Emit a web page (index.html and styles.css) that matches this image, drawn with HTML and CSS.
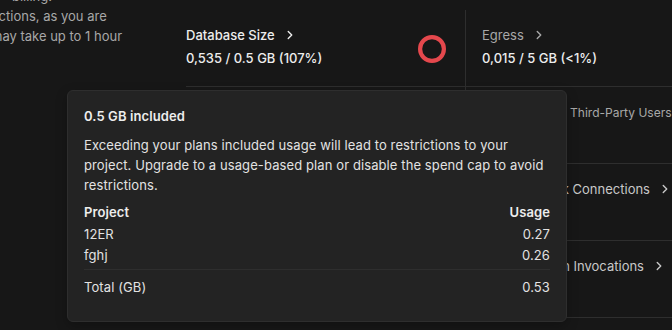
FILE: index.html
```html
<!DOCTYPE html>
<html lang="en">
<head>
<meta charset="utf-8">
<title>Usage</title>
<link rel="stylesheet" href="styles.css">
</head>
<body>
<div class="page">
  <aside class="intro">
    <div class="line l0">billing.</div>
    <div class="line l1">restrictions, as you are</div>
    <div class="line l2">may take up to 1 hour</div>
  </aside>
  <section class="metrics">
    <div class="cell mid">
      <div class="metric">
        <div class="title strong">Database Size <svg class="chev" viewBox="0 0 16 16"><path d="M6 4l4 4-4 4"/></svg></div>
        <div class="value">0,535 / 0.5 GB (107%)</div>
      </div>
      <svg class="ring" viewBox="0 0 28 28"><circle cx="14" cy="14" r="11.9"/></svg>
    </div>
    <div class="cell side">
      <div class="metric">
        <div class="title">Egress <svg class="chev" viewBox="0 0 16 16"><path d="M6 4l4 4-4 4"/></svg></div>
        <div class="value">0,015 / 5 GB (&lt;1%)</div>
      </div>
    </div>
    <div class="cell mid"></div>
    <div class="cell side">
      <div class="metric">
        <div class="title small">Monthly Active Third-Party Users <svg class="chev" viewBox="0 0 16 16"><path d="M6 4l4 4-4 4"/></svg></div>
      </div>
    </div>
    <div class="cell mid"></div>
    <div class="cell side">
      <div class="metric">
        <div class="title light">Realtime Peak Connections <svg class="chev" viewBox="0 0 16 16"><path d="M6 4l4 4-4 4"/></svg></div>
      </div>
    </div>
    <div class="cell mid"></div>
    <div class="cell side">
      <div class="metric">
        <div class="title light">Edge Function Invocations <svg class="chev" viewBox="0 0 16 16"><path d="M6 4l4 4-4 4"/></svg></div>
      </div>
    </div>
  </section>

  <div class="tooltip">
    <div class="tt-title">0.5 GB included</div>
    <p class="tt-body">Exceeding your plans included usage will lead to restrictions to your project. Upgrade to a usage-based plan or disable the spend cap to avoid restrictions.</p>
    <div class="tt-table">
      <div class="th">Project</div><div class="th num">Usage</div>
      <div class="td">12ER</div><div class="td num">0.27</div>
      <div class="td sep">fghj</div><div class="td num sep">0.26</div>
      <div class="tf">Total (GB)</div><div class="tf num">0.53</div>
    </div>
  </div>
</div>
</body>
</html>
```
FILE: styles.css
```css
* { box-sizing: border-box; }
html, body {
  margin: 0;
  padding: 0;
  background: #171717;
  width: 672px;
  height: 330px;
  overflow: hidden;
}
body {
  font-family: Inter, "Noto Sans", sans-serif;
  font-size: 13px;
  line-height: 20px;
  color: #ededed;
}
.page {
  position: relative;
  display: grid;
  grid-template-columns: 186px 1fr;
  height: 330px;
}
.intro {
  overflow: hidden;
  margin-top: -14px;
  color: #a8a8a8;
  white-space: nowrap;
}
.line { line-height: 20px; }
.l0 { text-indent: 12px; }
.l1 { text-indent: -33px; }
.l2 { text-indent: -9px; }

.metrics {
  display: grid;
  grid-template-columns: 279px 1fr;
  grid-auto-rows: 77px;
  margin-top: 10px;
  overflow: hidden;
}
.cell {
  border-bottom: 1px solid #2e2e2e;
  min-width: 0;
}
.mid {
  display: flex;
  align-items: center;
  justify-content: space-between;
  padding-right: 19px;
}
.side {
  border-left: 1px solid #2e2e2e;
  padding-left: 16px;
}
.metric {
  display: flex;
  flex-direction: column;
  gap: 3px;
  padding-top: 15px;
  align-self: flex-start;
}
.title {
  display: flex;
  align-items: center;
  gap: 8px;
  color: #a8a8a8;
  white-space: nowrap;
}
.title.strong { color: #ededed; font-weight: 500; }
.title.light { color: #c8c8c8; }
.title.small { font-size: 12px; padding-top: 1px; }
.value { color: #ededed; font-weight: 500; }
.chev {
  width: 14px;
  height: 14px;
  fill: none;
  stroke: currentColor;
  stroke-width: 1.6;
  stroke-linecap: round;
  stroke-linejoin: round;
  flex: none;
}
.ring {
  width: 28px;
  height: 28px;
  margin-top: 1px;
  fill: none;
  stroke: #e5484d;
  stroke-width: 4.2;
}

.tooltip {
  position: absolute;
  left: 67px;
  top: 90px;
  width: 500px;
  height: 232px;
  background: #232323;
  border: 1px solid #2e2e2e;
  border-radius: 6px;
  padding: 15px 16px;
  letter-spacing: 0.1px;
  box-shadow: 0 4px 12px rgba(0,0,0,0.25);
}
.tt-title {
  font-weight: 600;
  color: #ededed;
}
.tt-body {
  margin: 9px 0 0;
  color: #e2e2e2;
}
.tt-table {
  margin-top: 7px;
  display: grid;
  grid-template-columns: 1fr auto;
  line-height: 21.5px;
  color: #e2e2e2;
}
.th { font-weight: 600; color: #ededed; }
.num { text-align: right; }
.sep {
  padding-bottom: 2px;
  border-bottom: 1px solid #2e2e2e;
}
.tf { padding-top: 7px; }
```
